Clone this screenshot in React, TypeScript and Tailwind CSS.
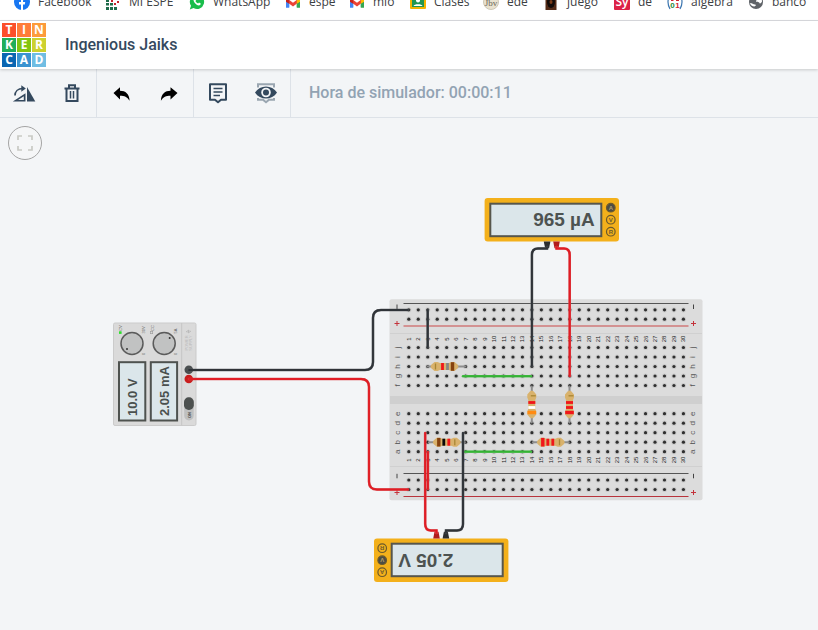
import type { ReactNode } from 'react';

const COLUMNS = Array.from({ length: 30 }, (_, i) => i + 1);
const colX = (n: number) => 408.8 + (n - 1) * 9.47;

const UPPER_ROWS: [string, number][] = [['j', 347.5], ['i', 357], ['h', 366.5], ['g', 376], ['f', 385.5]];
const LOWER_ROWS: [string, number][] = [['e', 413.7], ['d', 423.2], ['c', 432.7], ['b', 442.2], ['a', 451.7]];
const RAILS = [309.8, 319.2, 480, 489.5];

function Icon({ children }: { children: ReactNode }) {
  return (
    <svg viewBox="0 0 16 16" className="h-4 w-4 shrink-0" aria-hidden="true">
      {children}
    </svg>
  );
}

const gmail = (
  <Icon>
    <path d="M1 3v10.500h3.200V7.500z" fill="#4285f4" />
    <path d="M15 3v10.500h-3.200V7.500z" fill="#34a853" />
    <path d="M1 3.500l7 5.300 7-5.300v3.800l-7 5.200-7-5.200z" fill="#ea4335" />
    <path d="M11.800 6.500L15 4v4l-3.200 2z" fill="#fbbc04" />
    <path d="M1 4l3.200 2.500V10L1 8z" fill="#c5221f" />
    <path d="M1 8l3.200 2v3.500H1z" fill="#4285f4" />
    <path d="M15 8l-3.200 2v3.500H15z" fill="#34a853" />
  </Icon>
);

const BOOKMARKS: { label: string; width: string; icon: ReactNode }[] = [
  {
    label: 'Facebook',
    width: 'w-[91px]',
    icon: (
      <Icon>
        <circle cx="8" cy="8" r="8" fill="#1877f2" />
        <path d="M7 16v-5.500H5V8h2V6.500C7 4.500 8 3.500 9.800 3.500h1.400v2.200h-1C9.300 5.700 9 6.200 9 7v1h2.200l-.4 2.500H9V16z" fill="#fff" />
      </Icon>
    ),
  },
  {
    label: 'MI ESPE',
    width: 'w-[84px]',
    icon: (
      <Icon>
        <path d="M1 1h3v3H1zM1 5h3v3H1zM1 9h3v2.500H1zM1 13h3v3H1zM5 13h3v3H5zM9 13h3v3H9zM5 9h3v2.500H5zM5 1h3v3H5z" fill="#1d6b4a" />
        <path d="M6 6h2v2H6zM9 9h2v2H9zM12 7h2v2h-2zM11 4h2v2h-2z" fill="#c4262e" />
      </Icon>
    ),
  },
  {
    label: 'WhatsApp',
    width: 'w-[96px]',
    icon: (
      <Icon>
        <path d="M8 1a7 7 0 1 1-3.500 13L.8 15.500 2 11.800A7 7 0 0 1 8 1z" fill="#19bd4b" />
        <path d="M5.300 4.500c.5-.6 1.100-.4 1.400.3l.5 1.200-.8 1c.6 1.200 1.400 2 2.700 2.600l.9-1 1.700.9c.3.900-.8 2-1.900 2C7.500 11.300 4.300 8.200 4.600 5.700z" fill="#fff" />
      </Icon>
    ),
  },
  { label: 'espe', width: 'w-[64px]', icon: gmail },
  { label: 'mio', width: 'w-[61px]', icon: gmail },
  {
    label: 'Clases',
    width: 'w-[73px]',
    icon: (
      <Icon>
        <rect y="1" width="16" height="14" rx="1" fill="#f4b400" />
        <rect x="2" y="3" width="12" height="10" fill="#219653" />
        <circle cx="8" cy="6.500" r="2" fill="#fff" />
        <path d="M3.500 12c.5-2.500 8.500-2.500 9 0z" fill="#fff" />
      </Icon>
    ),
  },
  {
    label: 'ede',
    width: 'w-[60px]',
    icon: (
      <Icon>
        <circle cx="8" cy="8" r="7.500" fill="#e9e2cf" stroke="#cfc8b6" />
        <text x="8" y="12" textAnchor="middle" fontSize="9" fill="#6b6658" fontFamily="Liberation Serif, serif">Jbv</text>
      </Icon>
    ),
  },
  {
    label: 'juego',
    width: 'w-[71px]',
    icon: (
      <Icon>
        <rect x="2.500" width="11" height="16" fill="#532a16" />
        <ellipse cx="8" cy="8" rx="4" ry="6" fill="#120a08" />
        <ellipse cx="8" cy="8" rx="1.500" ry="2" fill="#7b3b17" />
      </Icon>
    ),
  },
  {
    label: 'de',
    width: 'w-[53px]',
    icon: (
      <Icon>
        <rect width="16" height="16" rx="1" fill="#dc2246" />
        <text x="8" y="11.500" textAnchor="middle" fontSize="12" fontWeight="600" fill="#fff" fontFamily="Open Sans, sans-serif">Sy</text>
      </Icon>
    ),
  },
  {
    label: 'algebra',
    width: 'w-[81px]',
    icon: (
      <Icon>
        <path d="M3 1Q-1 8 3 15M13 1q4 7 0 14" fill="none" stroke="#3c76b0" strokeWidth="1.200" />
        <text x="5.500" y="14" textAnchor="middle" fontSize="8" fontWeight="700" fill="#1f8a3b" fontFamily="Liberation Sans, sans-serif">0</text>
        <text x="10.500" y="14" textAnchor="middle" fontSize="8" fontWeight="700" fill="#cf2430" fontFamily="Liberation Sans, sans-serif">1</text>
        <path d="M4 6.500h2.500M9 6.500h3" stroke="#cf2430" />
      </Icon>
    ),
  },
  {
    label: 'banco',
    width: 'w-[70px]',
    icon: (
      <Icon>
        <circle cx="8" cy="8" r="7" fill="#5f6368" />
        <path d="M2 9c2.500 0 3 1.500 5 1.500 1.500 0 1 1.500-.5 2C4 12.500 2.500 11 2 9zM8 1.500c1 2 3 1.500 3 3S8 5.500 8 7s3 .5 3.500 2 2-.5 2.500-1.500C14 4 11.500 2 8 1.500z" fill="#fff" />
      </Icon>
    ),
  },
];

const LOGO: { letter: string; color: string }[] = [
  { letter: 'T', color: 'bg-[#fb4f2b]' },
  { letter: 'I', color: 'bg-[#ff7c38]' },
  { letter: 'N', color: 'bg-[#fd9b3a]' },
  { letter: 'K', color: 'bg-[#1fae5b]' },
  { letter: 'E', color: 'bg-[#83c40f]' },
  { letter: 'R', color: 'bg-[#cdd12f]' },
  { letter: 'C', color: 'bg-[#0a66b2]' },
  { letter: 'A', color: 'bg-[#3a93d0]' },
  { letter: 'D', color: 'bg-[#70bde3]' },
];

function ToolButton({ label, children }: { label: string; children: ReactNode }) {
  return (
    <button type="button" aria-label={label} className="flex h-full w-12 items-center justify-center">
      <svg viewBox="0 0 24 24" className="h-6 w-6" aria-hidden="true">
        {children}
      </svg>
    </button>
  );
}

function Resistor({ x, y, vertical = false, lead, bands }: {
  x: number;
  y: number;
  vertical?: boolean;
  lead: [number, number];
  bands: [number, string, boolean?][];
}) {
  return (
    <g transform={`translate(${x} ${y})${vertical ? ' rotate(90)' : ''}`}>
      <path d={`M${lead[0]} 0H${lead[1]}`} stroke="#8d8d8d" strokeWidth="2" strokeLinecap="round" />
      <path d="M-14 0-13-2-10-4.500H-7L-4.500-3.500H4.500L7-4.500H10L13-2 14 0 13 2 10 4.500H7L4.500 3.500H-4.500L-7 4.500H-10L-13 2z" fill="#d9b26c" />
      {bands.map(([pos, color, wide], i) => (
        <rect key={i} x={pos - (wide ? 1.7 : 1.4)} y={wide ? -4.3 : -3.5} width={wide ? 3.4 : 2.8} height={wide ? 8.6 : 7} fill={color} />
      ))}
    </g>
  );
}

function GoldTick({ x, y, vertical = false }: { x: number; y: number; vertical?: boolean }) {
  return <path d={vertical ? `M${x - 1} ${y}h5` : `M${x} ${y - 3}v6`} stroke="#a88634" strokeWidth="1.300" />;
}

function Meter({ x, y, flipped = false, value, mode }: { x: number; y: number; flipped?: boolean; value: string; mode: string }) {
  return (
    <g transform={`translate(${x} ${y})${flipped ? ' rotate(180)' : ''}`}>
      <rect x="-67.200" y="-21.700" width="134.400" height="43.400" rx="3" fill="#f3b01b" />
      <rect x="-61.500" y="-16" width="111" height="32.500" fill="#dbe6ea" stroke="#56564c" strokeWidth="2" />
      <text x="43" y="6.500" textAnchor="end" fontSize="19" fontWeight="700" fill="#4d5351" fontFamily="Liberation Sans, Arial, sans-serif">{value}</text>
      {['A', 'V', 'R'].map((m, i) => {
        const cy = -12 + i * 12;
        const on = m === mode;
        return (
          <g key={m}>
            <circle cx="59" cy={cy} r="4.300" fill={on ? '#4c4c46' : 'none'} stroke="#6b5a2c" strokeWidth="1.200" />
            <text x="59" y={cy + 2.3} textAnchor="middle" fontSize="6" fontWeight="700" fill={on ? '#b5a06a' : '#6b5a2c'} fontFamily="Liberation Sans, Arial, sans-serif">{m}</text>
          </g>
        );
      })}
      <path d="M-8 21.700h6.600l-1.300 6.800h-4z" fill="#2b2d2f" />
      <path d="M1.400 21.700H8l-1.300 6.800h-4z" fill="#b01c1c" />
    </g>
  );
}

function Breadboard() {
  return (
    <g fontFamily="Liberation Sans, Arial, sans-serif">
      <defs>
        <g id="hole">
          <circle r="2.600" fill="#cbcbcb" />
          <circle r="1.600" fill="#2f2f2f" />
        </g>
      </defs>
      <rect x="389.500" y="299.300" width="313" height="201" rx="2" fill="#dcdcdc" />
      <path d="M390 333.500H702M390 466.500H702" stroke="#d0d0d0" />
      <rect x="390" y="396" width="312" height="8" fill="#cfcfcf" />
      <path d="M403.500 303.500H688.500M403.500 473.500H688.500" stroke="#555" strokeWidth="1.200" />
      <path d="M403.500 326H688.500" stroke="#d07a7a" strokeWidth="1.500" />
      <path d="M403.500 496.500H688.500" stroke="#b8343c" strokeWidth="1.200" />
      {[397, 693.5].map((x) => (
        <g key={x}>
          <path d={`M${x} 304.500v4.500M${x} 473.800v4.500`} stroke="#444" />
          <path d={`M${x - 2.5} 323.500h5M${x} 321v5M${x - 2.5} 492.500h5M${x} 490v5`} stroke="#c4323a" />
        </g>
      ))}
      {RAILS.map((y) => COLUMNS.map((n) => <use key={`${y}-${n}`} href="#hole" x={colX(n)} y={y} />))}
      {[...UPPER_ROWS, ...LOWER_ROWS].map(([name, y]) => (
        <g key={name}>
          {COLUMNS.map((n) => <use key={n} href="#hole" x={colX(n)} y={y} />)}
          {[400, 695].map((x) => (
            <text key={x} transform={`translate(${x} ${y}) rotate(-90)`} textAnchor="middle" fontSize="8" fill="#555">{name}</text>
          ))}
        </g>
      ))}
      {[339, 460].map((y) =>
        COLUMNS.map((n) => (
          <text key={`${y}-${n}`} transform={`translate(${colX(n) + 2} ${y}) rotate(-90)`} textAnchor="middle" fontSize="6" fill="#222">{n}</text>
        )),
      )}
    </g>
  );
}

function Knob({ x, dotX, dotY }: { x: number; dotX: number; dotY: number }) {
  return (
    <g>
      <circle cx={x} cy="343.500" r="11" fill="#c1c2c2" stroke="#5b5b5b" strokeWidth="1.500" />
      <circle cx={x + dotX} cy={343.5 + dotY} r="1" fill="#333" />
    </g>
  );
}

function PowerSupply() {
  const readouts: [number, string, number][] = [[119, '10.0 V', 137], [150.8, '2.05 mA', 168.5]];
  const marks: [number, number, string][] = [
    [122, 328, 'CV'], [144.5, 330, '30V'], [153.5, 328, 'CC'], [176.5, 331, '5A'], [144.5, 354, '0'], [176.5, 354, '0'],
  ];
  return (
    <g fontFamily="Liberation Sans, Arial, sans-serif">
      <rect x="113.500" y="323" width="82.500" height="102.500" rx="1.500" fill="#dadada" stroke="#cbcbcb" />
      <path d="M181.700 323V425.500" stroke="#c6c6c6" />
      <rect x="119" y="331.300" width="2.600" height="2.600" fill="#2be02b" />
      <rect x="150.500" y="331.500" width="2.200" height="2.200" fill="none" stroke="#999" strokeWidth=".6" />
      {marks.map(([x, y, label]) => (
        <text key={`${x}-${y}`} transform={`translate(${x} ${y}) rotate(-90)`} textAnchor="middle" fontSize="4" fill="#666">{label}</text>
      ))}
      <Knob x={132} dotX={-5} dotY={5.5} />
      <Knob x={164.2} dotX={5.5} dotY={-5.5} />
      {readouts.map(([x, value, baseline]) => (
        <g key={value}>
          <rect x={x} y="362.200" width="26.300" height="58.300" fill="#dbe6ea" stroke="#4e524f" strokeWidth="2" />
          <text transform={`translate(${baseline} 416) rotate(-90)`} fontSize="13" fontWeight="700" fill="#4a504e">{value}</text>
        </g>
      ))}
      <path d="M186 332l3-2-1 3 3-2" fill="none" stroke="#bababa" />
      <text transform="translate(188 343) rotate(-90)" textAnchor="middle" fontSize="4" fill="#bbb">POWER</text>
      <text transform="translate(192 343) rotate(-90)" textAnchor="middle" fontSize="4" fill="#bbb">SUPPLY</text>
      <rect x="184.200" y="397.500" width="9.500" height="23" rx="4.700" fill="#bfc0c0" />
      <rect x="184" y="397.300" width="9.800" height="12.700" rx="4.700" fill="#4c504f" />
      <text transform="translate(190.500 415) rotate(-90)" textAnchor="middle" fontSize="4" fontWeight="700" fill="#444">ON</text>
      <circle cx="188.800" cy="369.700" r="4.300" fill="#4b4f50" />
      <circle cx="188.800" cy="379" r="4.300" fill="#c91d1d" />
    </g>
  );
}

function Wire({ d, color, shade }: { d: string; color: string; shade: string }) {
  return (
    <g fill="none" strokeLinecap="round">
      <path d={d} stroke={shade} strokeWidth="2.600" />
      <path d={d} stroke={color} strokeWidth="1.800" />
    </g>
  );
}

function Circuit() {
  const black = { color: '#2f3338', shade: '#55595d' };
  const red = { color: '#e01c24', shade: '#d94a4e' };
  const green = { color: '#35b235', shade: '#5fc25f' };
  return (
    <svg viewBox="0 118 818 512" className="block h-auto w-full" role="img" aria-label="Circuito">
      <PowerSupply />
      <Breadboard />
      <Meter x={551.8} y={219.7} value="965 µA" mode="A" />
      <Meter x={441.2} y={560.2} flipped value="2.05 V" mode="V" />
      <Wire d="M463 376.200H531" {...green} />
      <Wire d="M465 451.700H531" {...green} />
      <Resistor x={444.5} y={366.5} lead={[-17, 21]} bands={[[-2, '#f0161a'], [3, '#858585'], [8, '#85420f', true]]} />
      <GoldTick x={435.5} y={366.5} />
      <Resistor x={446.8} y={442.2} lead={[-18, 18]} bands={[[-8, '#85420f', true], [-3, '#080808'], [2, '#f0161a']]} />
      <GoldTick x={454.8} y={442.2} />
      <Resistor x={550.8} y={442.2} lead={[-18, 18]} bands={[[-8, '#f0161a', true], [-3, '#f0161a'], [2, '#f0161a']]} />
      <GoldTick x={559.5} y={442.2} />
      <Resistor x={531.8} y={404.5} vertical lead={[-18, 18]} bands={[[-2, '#f0161a'], [3, '#ffffff'], [8, '#ff8a12', true]]} />
      <GoldTick x={531.8} y={395.8} vertical />
      <Resistor x={569.5} y={404.5} vertical lead={[-18, 18]} bands={[[-2, '#f0161a'], [3, '#f0161a'], [8, '#f0161a', true]]} />
      <GoldTick x={569.5} y={395.8} vertical />
      <Wire d="M189 370H365Q373 370 373 362V318Q373 310 381 310H408" {...black} />
      <Wire d="M189 379H361Q369 379 369 387V481.500Q369 489.500 377 489.500H408" {...red} />
      <Wire d="M427.700 310V347" {...black} />
      <Wire d="M427.900 452V489" {...red} />
      <Wire d="M547 247V248.500H538Q531.900 248.500 531.900 255V366" {...black} />
      <Wire d="M556.500 247V248.500H564Q569.700 248.500 569.700 255V376" {...red} />
      <Wire d="M436.500 533V530.500H431Q425.200 530.500 425.200 524V433" {...red} />
      <Wire d="M446 533V530.500H457Q463 530.500 463 524V433" {...black} />
    </svg>
  );
}

export default function App() {
  return (
    <div className="flex min-h-screen flex-col bg-[#f3f5f7] font-['Roboto',sans-serif]">
      <nav aria-label="Marcadores" className="flex h-[21px] items-end overflow-hidden border-b border-[#dadce0] bg-white pb-[10px] pl-[14px]">
        {BOOKMARKS.map(({ label, width, icon }) => (
          <a key={label} href="#" className={`flex shrink-0 items-center gap-2 font-['Open_Sans',sans-serif] text-[12px] leading-4 text-[#3c4043] ${width}`}>
            {icon}
            {label}
          </a>
        ))}
      </nav>

      <header className="relative flex h-12 items-center gap-[19px] bg-white pl-[2px] shadow-[0_1px_3px_rgba(0,0,0,0.18)]">
        <a href="#" aria-label="Tinkercad" className="grid grid-cols-3 gap-px">
          {LOGO.map(({ letter, color }) => (
            <span key={letter} className={`flex h-[14px] w-[14px] items-center justify-center font-['Open_Sans',sans-serif] text-[12px] leading-[14px] font-bold text-white ${color}`}>
              {letter}
            </span>
          ))}
        </a>
        <h1 className="text-base font-medium text-[#34495e]">Ingenious Jaiks</h1>
      </header>

      <div className="flex h-[49px] items-center border-b border-[#dde2e8]">
        <div className="flex h-full border-r border-[#dde2e8]">
          <ToolButton label="Girar">
            <path d="M.8 20.500h12.700V12.300zM6 18.900h5.800v-3.600z" fill="#34495e" fillRule="evenodd" />
            <path d="M15 6v14.500h8.300z" fill="#34495e" />
            <path d="M3 14.500c0-4 3-7 7.800-7" fill="none" stroke="#34495e" strokeWidth="1.700" />
            <path d="M9.300 4.200l4.500 3.300-4.500 3.300z" fill="#34495e" />
          </ToolButton>
          <ToolButton label="Eliminar">
            <path d="M4.500 7.500h15M9 7V4.200h6V7M6.500 8v12h11V8" fill="none" stroke="#34495e" strokeWidth="2" />
            <path d="M10.500 10v7.500M13.500 10v7.500" stroke="#34495e" strokeWidth="1.500" />
          </ToolButton>
        </div>
        <div className="flex h-full border-r border-[#dde2e8]">
          <ToolButton label="Deshacer">
            <path d="M11 6.300v3.400c5.500 0 9.300 3 9.600 10-2.500-3.900-5-5-9.600-5v3.700L4.500 12z" fill="#000" />
          </ToolButton>
          <ToolButton label="Rehacer">
            <path d="M13.500 6.300v3.400c-5.500 0-9.300 3-9.600 10 2.500-3.900 5-5 9.600-5v3.700L20.500 12z" fill="#000" />
          </ToolButton>
        </div>
        <div className="flex h-full border-r border-[#dde2e8]">
          <ToolButton label="Notas">
            <path d="M4 3.200h16v15.500h-5L12 21.300l-3-2.600H4z" fill="none" stroke="#34495e" strokeWidth="2" strokeLinejoin="round" />
            <path d="M7.500 7.500h9M7.500 11h9M7.500 14.500h6.500" stroke="#34495e" strokeWidth="1.700" />
          </ToolButton>
          <ToolButton label="Mostrar notas">
            <path d="M4 6.500V3.200h16v3.300M4 17v1.700h5l3 2.600 3-2.600h5V17" fill="none" stroke="#9aa6b1" strokeWidth="2" />
            <path d="M1 11.500C6 3.500 18 3.500 23 11.500c-5 8-17 8-22 0z" fill="#34495e" />
            <circle cx="12" cy="11.500" r="4.800" fill="#f3f5f7" />
            <circle cx="12" cy="11.500" r="3" fill="#34495e" />
          </ToolButton>
        </div>
        <p className="pl-[18px] text-base font-medium text-[#92a3b3]">Hora de simulador: 00:00:11</p>
      </div>

      <main className="relative">
        <Circuit />
        <button type="button" aria-label="Ajustar a la vista" className="absolute top-2 left-2 flex h-[34px] w-[34px] items-center justify-center rounded-full border border-[#a5a5a5] bg-[#f5f6f7]">
          <svg viewBox="0 0 16 16" className="h-4 w-4" aria-hidden="true">
            <path d="M1 5V1h4M11 1h4v4M15 11v4h-4M5 15H1v-4" fill="none" stroke="#c9cac5" strokeWidth="1.700" />
          </svg>
        </button>
      </main>
    </div>
  );
}
